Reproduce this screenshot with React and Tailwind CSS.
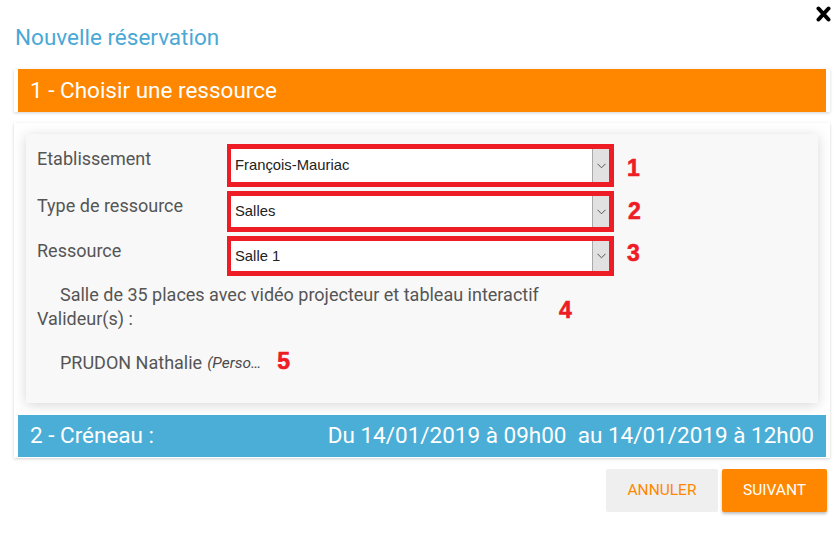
import React from "react";

function Chevron() {
  return (
    <svg width="9" height="6" viewBox="0 0 9 6" className="block">
      <path d="M0.5 0.8 L4.5 4.8 L8.5 0.8" fill="none" stroke="#555" strokeWidth="1" />
    </svg>
  );
}

function SelectBox({ value, h }) {
  return (
    <div className={`w-[387px] ${h} border-[5px] border-l-[4px] border-[#ee1c25] bg-white flex`}>
      <div className="flex-1 flex items-center pl-[4px] text-[14.8px] text-[#222] font-['Liberation_Sans',Arial,sans-serif]">
        {value}
      </div>
      <div className="w-[17px] bg-[#e1e1e1] border-l border-[#a9a9a9] flex items-center justify-center">
        <Chevron />
      </div>
    </div>
  );
}

function Num({ children, cls }) {
  return (
    <span className={`text-[23px] font-bold text-[#ee1c25] font-['Liberation_Sans',Arial,sans-serif] leading-none [-webkit-text-stroke:0.6px_#ee1c25] ${cls}`}>
      {children}
    </span>
  );
}

export default function App() {
  return (
    <div className="w-[839px] h-[538px] bg-white relative pl-[14px] pr-[9px] font-['Roboto',sans-serif]">
      <div className="absolute right-[8px] top-[6px]">
        <svg width="15" height="16" viewBox="0 0 15 16">
          <path d="M2.5 2.5 L12.5 13.5 M12.5 2.5 L2.5 13.5" stroke="#000" strokeWidth="4" strokeLinecap="round" />
        </svg>
      </div>

      <div className="pt-[23px] pl-px text-[22.5px] leading-[29px] text-[#4aa8d6]">
        Nouvelle réservation
      </div>

      <div className="mt-[17px] bg-white px-[4px] shadow-[0_1px_3px_rgba(0,0,0,0.18)]">
        <div className="h-[43px] bg-[#ff8700] flex items-center pl-[12px] text-[22.5px] text-white">
          1 - Choisir une ressource
        </div>
      </div>

      <div className="mt-[11px] bg-white px-[4px] pt-[11px] pb-px shadow-[0_1px_3px_rgba(0,0,0,0.18)]">
        <div className="mx-[8px] bg-[#f8f8f8] shadow-[0_2px_12px_rgba(0,0,0,0.16)] relative pt-[10px] pl-[11px] h-[269px] text-[18px] text-[#555]">
          <div className="flex flex-col gap-[4px]">
            <div className="flex">
              <div className="w-[190px] pt-[2px] leading-[26px]">Etablissement</div>
              <SelectBox value="François-Mauriac" h="h-[43px]" />
              <Num cls="ml-[13px] mt-[13px]">1</Num>
            </div>
            <div className="flex">
              <div className="w-[190px] pt-[2px] leading-[26px]">Type de ressource</div>
              <SelectBox value="Salles" h="h-[41px]" />
              <Num cls="ml-[14px] mt-[9px]">2</Num>
            </div>
            <div className="flex">
              <div className="w-[190px] pt-[2px] leading-[26px]">Ressource</div>
              <SelectBox value="Salle 1" h="h-[40px]" />
              <Num cls="ml-[13px] mt-[6px]">3</Num>
            </div>
          </div>
          <div className="mt-[7px] pl-[23px] leading-[24px]">
            Salle de 35 places avec vidéo projecteur et tableau interactif
          </div>
          <div className="leading-[24px]">Valideur(s) :</div>
          <div className="mt-[20px] pl-[23px] leading-[24px] flex items-center">
            <span>PRUDON Nathalie</span>
            <span className="italic text-[15.5px] ml-[5px] text-[#4a4a4a]">(Perso…</span>
            <Num cls="ml-[16px] -mt-[3px]">5</Num>
          </div>
          <Num cls="absolute left-[533px] top-[165px]">4</Num>
        </div>
        <div className="mt-[12px] h-[42px] bg-[#4baed6] flex items-center justify-between pl-[12px] pr-[12px] text-[22.5px] text-white whitespace-pre">
          <span>2 - Créneau :</span>
          <span>Du 14/01/2019 à 09h00  au 14/01/2019 à 12h00</span>
        </div>
      </div>

      <div className="mt-[11px] flex justify-end gap-[4px] mr-[3px]">
        <button className="w-[112px] h-[43px] bg-[#efefef] rounded-[2px] text-[15.5px] text-[#ff8700]">
          ANNULER
        </button>
        <button className="w-[105px] h-[43px] bg-[#ff8700] rounded-[2px] text-[15.5px] text-white shadow-[0_2px_3px_rgba(0,0,0,0.25)]">
          SUIVANT
        </button>
      </div>
    </div>
  );
}
